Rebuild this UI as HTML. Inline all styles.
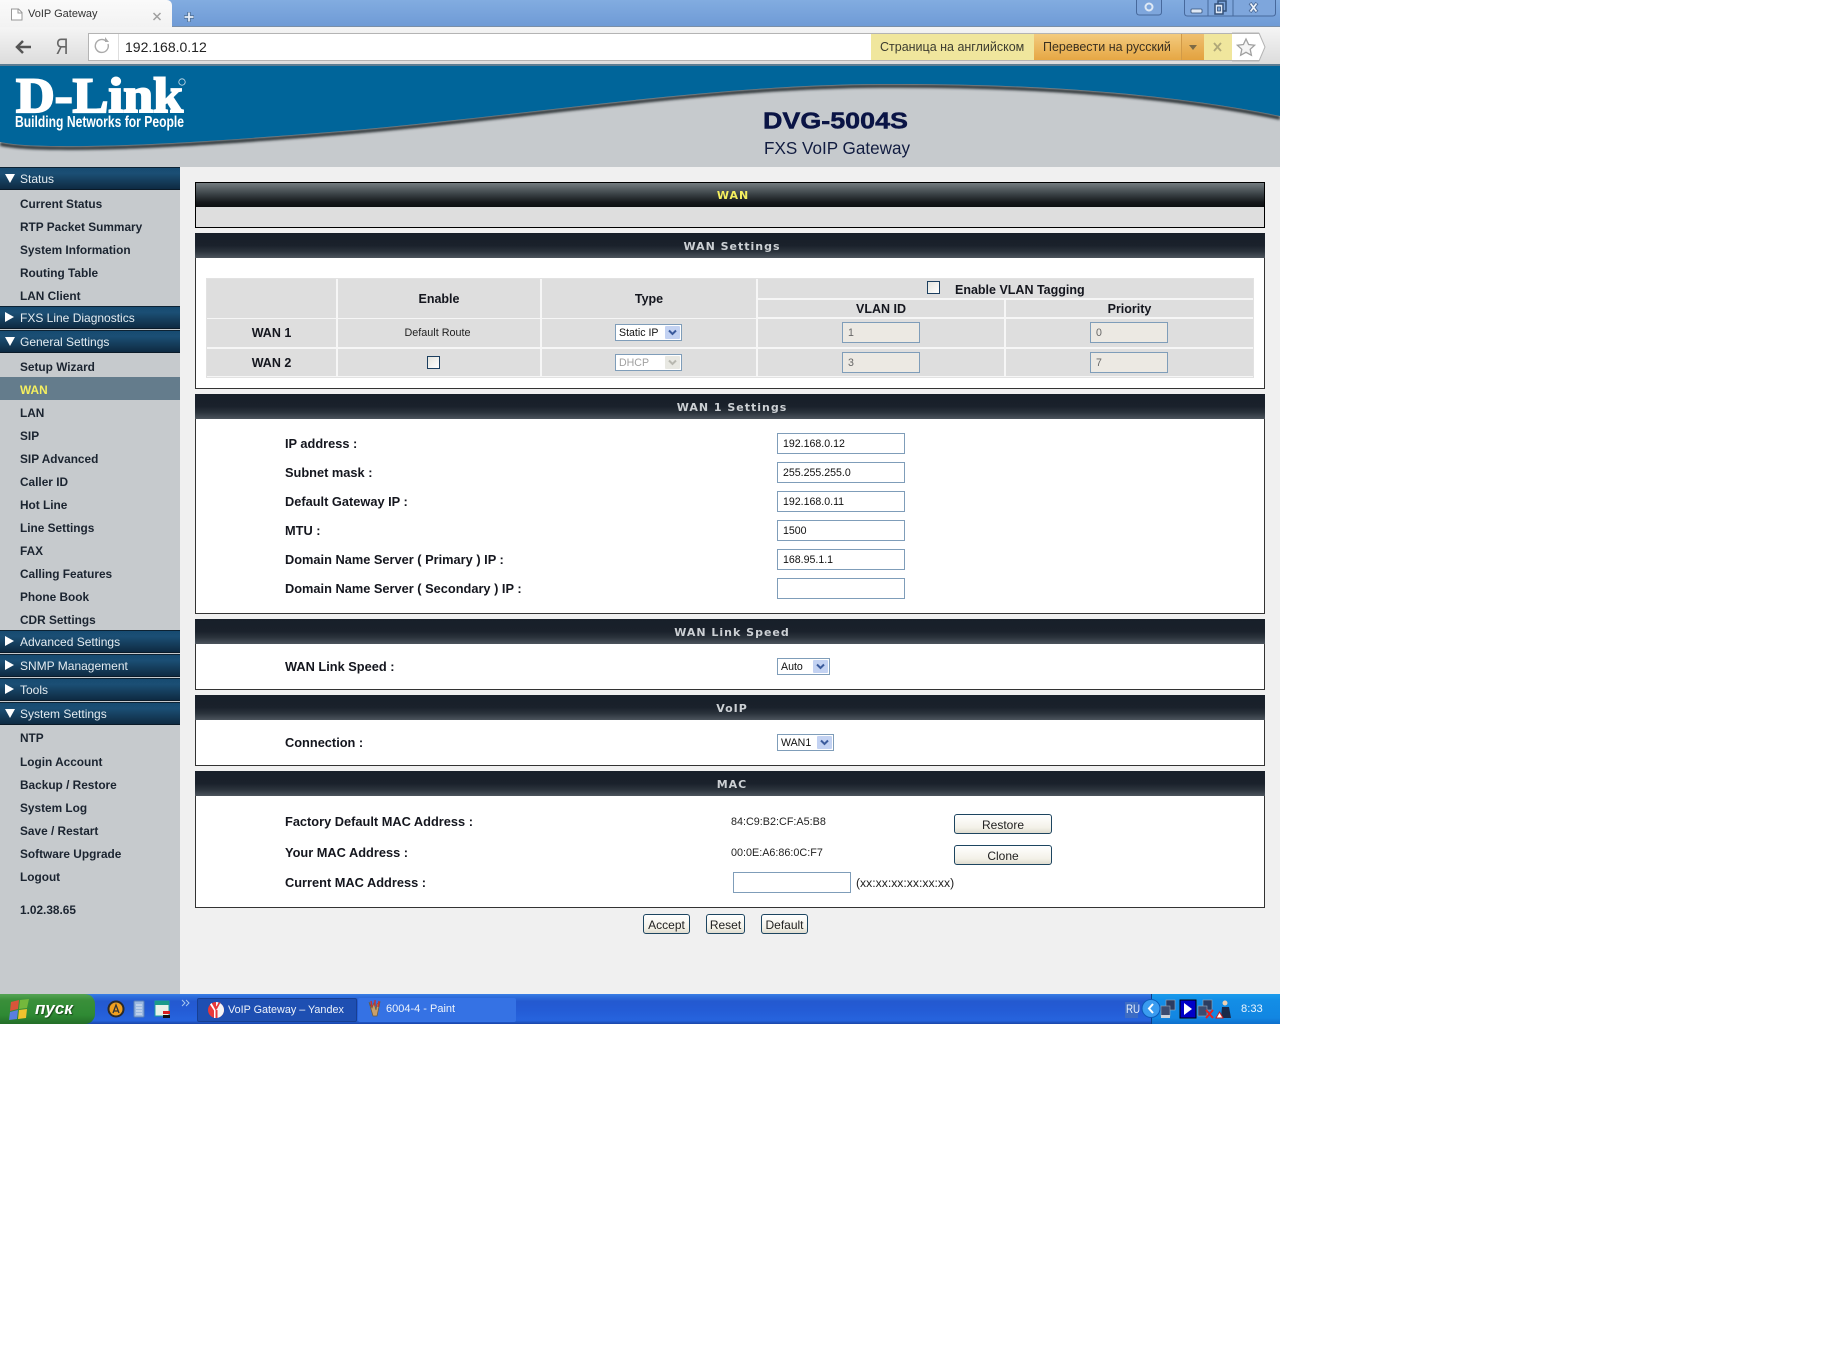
<!DOCTYPE html>
<html lang="en"><head><meta charset="utf-8"><title>VoIP Gateway</title>
<style>
html,body{margin:0;padding:0;background:#fff;width:1824px;height:1368px;overflow:hidden}
body{font-family:"Liberation Sans","Noto Sans CJK SC",sans-serif;color:#111}
#w{position:absolute;left:0;top:0;width:1280px;height:1024px;overflow:hidden;background:#f0f0f0}
.a,.t,.s,.i,.h,.l,.m{position:absolute}
.t{white-space:nowrap;line-height:20px;height:20px}
/* sidebar */
#side{position:absolute;left:0;top:167px;width:180px;height:827px;background:#c6cacd}
.s{left:0;width:180px;height:23px;box-sizing:border-box;background:linear-gradient(#164a70,#1b4f75 25%,#12344f 80%,#0e2a42);border-top:1px solid #0c2233;border-bottom:1px solid #0a1a28;color:#e4ecf1;font-size:12px;line-height:23px;padding-left:20px;white-space:nowrap}
.s i{position:absolute;left:5px;width:0;height:0;border-style:solid}
.s i.d{top:6px;border-width:9px 5px 0 5px;border-color:#fff transparent transparent transparent}
.s i.r{top:5px;left:5px;border-width:5px 0 5px 9px;border-color:transparent transparent transparent #fff}
.i{left:20px;margin-top:1px;font-size:11.85px;font-weight:bold;color:#1b2430;line-height:20px;white-space:nowrap}
/* panels */
.p{position:absolute;left:195px;width:1070px;box-sizing:border-box;background:#fff;border:1px solid #333;border-top:0}
.h{left:-1px;right:-1px;top:0;height:25px;background:linear-gradient(#171f29,#1a212b 50%,#2c343d 75%,#4c545c);color:#ccd0d4;font:bold 11px/27px "DejaVu Sans",sans-serif;letter-spacing:1px;text-align:center;padding-left:4px}
.l{left:285px;font-size:12.8px;font-weight:bold;color:#14161e;line-height:20px;white-space:nowrap}
input.f,select.f{position:absolute;box-sizing:border-box;margin:0;border:1px solid #7f9db9;background:#fff;font:10.6px "Liberation Sans",sans-serif;color:#111;padding:0 0 0 5px;border-radius:0;outline:0}
select.f{appearance:none;-webkit-appearance:none;padding-left:3px}
input.o{background:#ece9e3;color:#666}
input.c{position:absolute;margin:0;appearance:none;-webkit-appearance:none;border:1px solid #1c3f60;background:linear-gradient(135deg,#e4e4de,#fff);box-sizing:border-box}
button{position:absolute;box-sizing:border-box;margin:0;padding:1px 0 0;border:1px solid #1d4560;border-radius:3px;background:linear-gradient(#fff,#f3f1e8 70%,#dfdcd0);font:12px "Liberation Sans",sans-serif;color:#222;height:20px}
.ar{position:absolute;width:15px;height:13px;pointer-events:none}
.c1{position:absolute;background:#dedede}
.b{font-weight:bold;font-size:12.5px;color:#14161e;text-align:center}
</style></head><body>
<div id="w">

<!-- browser chrome -->
<div class="a" style="left:0;top:0;width:1280px;height:27px;background:linear-gradient(#82ace0,#6f9bd6);border-bottom:1px solid #7a8fa8;box-sizing:border-box"></div>
<div class="a" style="left:0;top:0;width:172px;height:28px;background:linear-gradient(#fafafa,#f2f2f2);border-top-right-radius:5px"></div>
<div class="t" style="left:28px;top:4px;font-size:11px;color:#333">VoIP Gateway</div>
<div class="a" style="left:0;top:27px;width:1280px;height:39px;background:linear-gradient(#f5f5f5,#dcdcdc);border-bottom:2px solid #5d7d92;box-sizing:border-box"></div>
<div class="a" style="left:88px;top:33px;width:1171px;height:28px;box-sizing:border-box;background:#fff;border:1px solid #b4b4b4;border-right:0"></div>
<div class="a" style="left:118px;top:34px;width:1px;height:26px;background:#dedede"></div>
<div class="t" style="left:125px;top:37px;font-size:14px;color:#222">192.168.0.12</div>
<div class="t" style="left:54px;top:37px;font-size:22px;color:#666;transform:scaleX(.8)">Я</div>
<div class="a" style="left:871px;top:34px;width:163px;height:26px;background:#f0e69d"></div>
<div class="t" style="left:880px;top:37px;font-size:12.5px;color:#3c3c30">Страница на английском</div>
<div class="a" style="left:1034px;top:34px;width:147px;height:26px;background:linear-gradient(#f3cb7e,#e6a744)"></div>
<div class="t" style="left:1043px;top:37px;font-size:12.5px;color:#3a3020">Перевести на русский</div>
<div class="a" style="left:1181px;top:34px;width:23px;height:26px;background:linear-gradient(#efc070,#e3a23f);border-left:1px solid #d19a48;box-sizing:border-box"></div>
<div class="a" style="left:1204px;top:34px;width:28px;height:26px;background:#f0e69d"></div>
<div class="a" style="left:1232px;top:34px;width:28px;height:26px;background:#fff"></div>
<svg class="a" style="left:0;top:0" width="1280" height="66" viewBox="0 0 1280 66">
 <path d="M11.5 9h7l3.500 3.500V20h-10.500z" fill="#fff" stroke="#999"/><path d="M18 9v4h4" fill="none" stroke="#999"/>
 <path d="M153.500 13l7 7M160.500 13l-7 7" stroke="#a0a0a0" stroke-width="1.500"/>
 <path d="M189 12v10M184 17h10" stroke="#4f7096" stroke-width="3.500"/><path d="M189 12.500v9M184.500 17h9" stroke="#e6eef8" stroke-width="1.800"/>
 <path d="M1136.500 0v12q0 3 3 3h19q3 0 3-3V0" fill="#7ea6dc" stroke="#47699c"/>
 <circle cx="1149" cy="7" r="3.500" fill="none" stroke="#dfe9f5" stroke-width="2"/>
 <path d="M1184.500 0v13q0 3 3 3h85q3 0 3-3V0" fill="#7ea6dc" stroke="#47699c"/>
 <path d="M1208 0v16M1233 0v16" stroke="#47699c"/>
 <rect x="1191" y="9" width="11" height="4" rx="1" fill="#dfe9f5" stroke="#33507a" stroke-width=".8"/>
 <rect x="1218" y="1" width="8" height="10" fill="none" stroke="#33507a" stroke-width="1.500"/><rect x="1215" y="4" width="8" height="10" fill="#dfe9f5" stroke="#33507a" stroke-width="1.500"/><rect x="1217.500" y="7" width="3" height="4" fill="#7ea6dc" stroke="#33507a" stroke-width=".8"/>
 <path d="M1250 3l7 9M1257 3l-7 9" stroke="#4a6a98" stroke-width="3.500"/><path d="M1250.500 3.500l6 8M1256.500 3.500l-6 8" stroke="#eaf0f8" stroke-width="1.800"/>
 <path d="M31 47H17M23 41l-6 6 6 6" fill="none" stroke="#555" stroke-width="2.500"/>
 <path d="M108 44a6.500 6.500 0 1 1-2-3" fill="none" stroke="#aaa" stroke-width="1.400"/><path d="M105 37v5h4z" fill="#aaa"/>
 <path d="M1189 45l8 0-4 5z" fill="#7e6a45"/>
 <path d="M1214 43l7 8M1221 43l-7 8" stroke="#b0a878" stroke-width="1.800"/>
 <path d="M1259 33l6 14-6 14z" fill="#fff"/><path d="M1259 33l6 14-6 14M1232 33h27M1232 61h27" fill="none" stroke="#b4b4b4"/>
 <path d="M1246 39l2.600 5.500 6 .7-4.400 4.100 1.200 6-5.400-3-5.400 3 1.200-6-4.400-4.100 6-.7z" fill="#f4f4f4" stroke="#a0a0a0" stroke-width="1.300"/>
</svg>

<!-- banner -->
<svg class="a" style="left:0;top:66px" width="1280" height="101" viewBox="0 66 1280 101">
 <defs>
  <filter id="bl" x="-5%" y="-50%" width="110%" height="200%"><feGaussianBlur stdDeviation="1.200"/></filter>
 </defs>
 <rect x="0" y="66" width="1280" height="101" fill="#c6cacd"/>
 <path d="M0 144C15 147 35 148 60 148C130 149 230 142 330 134C520 119 700 87 880 86C1040 85 1180 97 1280 118" fill="none" stroke="#2b3036" stroke-width="3.500" filter="url(#bl)"/>
 <path d="M0 66H1280V116C1180 95 1040 83 880 84C700 85 520 117 330 132C230 140 130 147 60 146C35 146 15 145 0 142Z" fill="#00659a"/>
 <text x="16" y="112" font-family="Liberation Serif" font-weight="bold" font-size="50" fill="#fff" stroke="#fff" stroke-width="2" textLength="167" lengthAdjust="spacingAndGlyphs">D-Link</text>
 <text x="15" y="127" font-family="Liberation Sans" font-weight="bold" font-size="15.500" fill="#fff" textLength="169" lengthAdjust="spacingAndGlyphs">Building Networks for People</text>
 <circle cx="182" cy="82" r="3.200" fill="none" stroke="#cfe0ea" stroke-width=".8"/>
 <text x="763" y="128.500" font-family="Liberation Sans" font-weight="bold" font-size="23" fill="#0a1445" stroke="#0a1445" stroke-width=".5" textLength="145" lengthAdjust="spacingAndGlyphs">DVG-5004S</text>
 <text x="764" y="154" font-family="Liberation Sans" font-size="17.500" fill="#111c40" textLength="146" lengthAdjust="spacingAndGlyphs">FXS VoIP Gateway</text>
</svg>

<!-- sidebar -->
<div id="side"></div>
<div class="s" style="top:167px"><i class="d"></i>Status</div>
<div class="i" style="top:193px">Current Status</div>
<div class="i" style="top:216px">RTP Packet Summary</div>
<div class="i" style="top:239px">System Information</div>
<div class="i" style="top:262px">Routing Table</div>
<div class="i" style="top:285px">LAN Client</div>
<div class="s" style="top:306px"><i class="r"></i>FXS Line Diagnostics</div>
<div class="s" style="top:330px"><i class="d"></i>General Settings</div>
<div class="i" style="top:356px">Setup Wizard</div>
<div class="a" style="left:0;top:377px;width:180px;height:23px;background:#647c8c"></div>
<div class="i" style="top:379px;color:#f5ef5f">WAN</div>
<div class="i" style="top:402px">LAN</div>
<div class="i" style="top:425px">SIP</div>
<div class="i" style="top:448px">SIP Advanced</div>
<div class="i" style="top:471px">Caller ID</div>
<div class="i" style="top:494px">Hot Line</div>
<div class="i" style="top:517px">Line Settings</div>
<div class="i" style="top:540px">FAX</div>
<div class="i" style="top:563px">Calling Features</div>
<div class="i" style="top:586px">Phone Book</div>
<div class="i" style="top:609px">CDR Settings</div>
<div class="s" style="top:630px"><i class="r"></i>Advanced Settings</div>
<div class="s" style="top:654px"><i class="r"></i>SNMP Management</div>
<div class="s" style="top:678px"><i class="r"></i>Tools</div>
<div class="s" style="top:702px"><i class="d"></i>System Settings</div>
<div class="i" style="top:727px">NTP</div>
<div class="i" style="top:751px">Login Account</div>
<div class="i" style="top:774px">Backup / Restore</div>
<div class="i" style="top:797px">System Log</div>
<div class="i" style="top:820px">Save / Restart</div>
<div class="i" style="top:843px">Software Upgrade</div>
<div class="i" style="top:866px">Logout</div>
<div class="i" style="top:899px">1.02.38.65</div>

<!-- WAN title panel -->
<div class="a" style="left:195px;top:182px;width:1070px;height:46px;box-sizing:border-box;border:1px solid #000;background:#dedede"></div>
<div class="a" style="left:196px;top:183px;width:1068px;height:24px;background:linear-gradient(#747c80,#3c4448 45%,#16191c 80%,#0c0e10);color:#f5ef5f;font:bold 11px/26px 'DejaVu Sans',sans-serif;letter-spacing:1px;text-align:center;padding-left:6px;box-sizing:border-box">WAN</div>

<!-- WAN settings -->
<div class="p" style="top:233px;height:156px"><div class="h">WAN Settings</div></div>
<div class="a" style="left:206px;top:278px;width:1048px;height:100px;background:#f6f6f6;outline:1px solid #e2e2e2;outline-offset:-1px"></div>
<div class="c1" style="left:207px;top:279px;width:129px;height:39px"></div>
<div class="c1 b" style="left:338px;top:279px;width:202px;height:39px;line-height:41px">Enable</div>
<div class="c1 b" style="left:542px;top:279px;width:214px;height:39px;line-height:41px">Type</div>
<div class="c1" style="left:758px;top:279px;width:495px;height:19px"></div>
<div class="c1 b" style="left:758px;top:300px;width:246px;height:17px;line-height:18px">VLAN ID</div>
<div class="c1 b" style="left:1006px;top:300px;width:247px;height:17px;line-height:18px">Priority</div>
<div class="c1 b" style="left:207px;top:319px;width:129px;height:28px;line-height:28px">WAN 1</div>
<div class="c1" style="left:338px;top:319px;width:202px;height:28px;font-size:10.8px;line-height:29px;color:#222;text-align:center;padding-right:3px;box-sizing:border-box">Default Route</div>
<div class="c1" style="left:542px;top:319px;width:214px;height:28px"></div>
<div class="c1" style="left:758px;top:319px;width:246px;height:28px"></div>
<div class="c1" style="left:1006px;top:319px;width:247px;height:28px"></div>
<div class="c1 b" style="left:207px;top:349px;width:129px;height:27px;line-height:28px">WAN 2</div>
<div class="c1" style="left:338px;top:349px;width:202px;height:27px"></div>
<div class="c1" style="left:542px;top:349px;width:214px;height:27px"></div>
<div class="c1" style="left:758px;top:349px;width:246px;height:27px"></div>
<div class="c1" style="left:1006px;top:349px;width:247px;height:27px"></div>
<input class="c" type="checkbox" style="left:927px;top:281px;width:13px;height:13px">
<div class="t b" style="left:955px;top:280px;font-size:12.5px">Enable VLAN Tagging</div>
<select class="f" style="left:615px;top:324px;width:67px;height:17px"><option>Static IP</option></select>
<svg class="ar" style="left:665px;top:326px" viewBox="0 0 15 13"><rect width="15" height="13" rx="1" fill="#c3d2f2"/><path d="M4 4.500l3.500 3.500 3.500-3.500" fill="none" stroke="#3b5b9c" stroke-width="2"/></svg>
<input class="c" type="checkbox" style="left:427px;top:356px;width:13px;height:13px">
<select class="f" disabled style="left:615px;top:354px;width:67px;height:17px;color:#a0a0a0;opacity:1"><option>DHCP</option></select>
<svg class="ar" style="left:665px;top:356px" viewBox="0 0 15 13"><rect width="15" height="13" rx="1" fill="#e8e8e2"/><path d="M4 4.500l3.500 3.500 3.500-3.500" fill="none" stroke="#b8b8b0" stroke-width="2"/></svg>
<input class="f o" value="1" style="left:842px;top:322px;width:78px;height:21px">
<input class="f o" value="0" style="left:1090px;top:322px;width:78px;height:21px">
<input class="f o" value="3" style="left:842px;top:352px;width:78px;height:21px">
<input class="f o" value="7" style="left:1090px;top:352px;width:78px;height:21px">

<!-- WAN 1 settings -->
<div class="p" style="top:394px;height:220px"><div class="h">WAN 1 Settings</div></div>
<div class="l" style="top:434px">IP address :</div>
<div class="l" style="top:463px">Subnet mask :</div>
<div class="l" style="top:492px">Default Gateway IP :</div>
<div class="l" style="top:521px">MTU :</div>
<div class="l" style="top:550px">Domain Name Server ( Primary ) IP :</div>
<div class="l" style="top:579px">Domain Name Server ( Secondary ) IP :</div>
<input class="f" value="192.168.0.12" style="left:777px;top:433px;width:128px;height:21px">
<input class="f" value="255.255.255.0" style="left:777px;top:462px;width:128px;height:21px">
<input class="f" value="192.168.0.11" style="left:777px;top:491px;width:128px;height:21px">
<input class="f" value="1500" style="left:777px;top:520px;width:128px;height:21px">
<input class="f" value="168.95.1.1" style="left:777px;top:549px;width:128px;height:21px">
<input class="f" value="" style="left:777px;top:578px;width:128px;height:21px">

<!-- Link speed -->
<div class="p" style="top:619px;height:71px"><div class="h">WAN Link Speed</div></div>
<div class="l" style="top:657px">WAN Link Speed :</div>
<select class="f" style="left:777px;top:658px;width:53px;height:17px"><option>Auto</option></select>
<svg class="ar" style="left:813px;top:660px" viewBox="0 0 15 13"><rect width="15" height="13" rx="1" fill="#c3d2f2"/><path d="M4 4.500l3.500 3.500 3.500-3.500" fill="none" stroke="#3b5b9c" stroke-width="2"/></svg>

<!-- VoIP -->
<div class="p" style="top:695px;height:71px"><div class="h">VoIP</div></div>
<div class="l" style="top:733px">Connection :</div>
<select class="f" style="left:777px;top:734px;width:57px;height:17px"><option>WAN1</option></select>
<svg class="ar" style="left:817px;top:736px" viewBox="0 0 15 13"><rect width="15" height="13" rx="1" fill="#c3d2f2"/><path d="M4 4.500l3.500 3.500 3.500-3.500" fill="none" stroke="#3b5b9c" stroke-width="2"/></svg>

<!-- MAC -->
<div class="p" style="top:771px;height:137px"><div class="h">MAC</div></div>
<div class="l" style="top:812px">Factory Default MAC Address :</div>
<div class="l" style="top:843px">Your MAC Address :</div>
<div class="l" style="top:873px">Current MAC Address :</div>
<div class="t" style="left:731px;top:812px;font-size:10.8px;color:#222">84:C9:B2:CF:A5:B8</div>
<div class="t" style="left:731px;top:843px;font-size:10.8px;color:#222">00:0E:A6:86:0C:F7</div>
<button style="left:954px;top:814px;width:98px">Restore</button>
<button style="left:954px;top:845px;width:98px">Clone</button>
<input class="f" value="" style="left:733px;top:872px;width:118px;height:21px">
<div class="t" style="left:856px;top:873px;font-size:12.2px;color:#222">(xx:xx:xx:xx:xx:xx)</div>
<button style="left:643px;top:914px;width:47px">Accept</button>
<button style="left:706px;top:914px;width:39px">Reset</button>
<button style="left:761px;top:914px;width:47px">Default</button>

<!-- taskbar -->
<div class="a" style="left:0;top:994px;width:1280px;height:30px;background:linear-gradient(#3b7fe6,#2f6fdc 8%,#2459d0 25%,#245cd6 55%,#2664de 88%,#1a46a8)"></div>
<div class="a" style="left:0;top:994px;width:95px;height:30px;background:linear-gradient(#55a455,#3a8f3a 20%,#2f8a34 70%,#236d28);border-radius:0 10px 10px 0"></div>
<div class="t" style="left:35px;top:998px;font:italic bold 17px/22px 'Liberation Sans',sans-serif;color:#fff;text-shadow:1px 1px 1px #1a4a1a">пуск</div>
<div class="a" style="left:197px;top:998px;width:160px;height:24px;background:#1e4fb2;border:1px solid #173f92;box-sizing:border-box;border-radius:2px"></div>
<div class="a" style="left:358px;top:998px;width:158px;height:24px;background:#3572e4;border-radius:2px"></div>
<div class="t" style="left:228px;top:1000px;font-size:10.8px;color:#eef3fb">VoIP Gateway – Yandex</div>
<div class="t" style="left:386px;top:999px;font-size:11px;color:#eef3fb">6004-4 - Paint</div>
<div class="a" style="left:1151px;top:994px;width:129px;height:30px;background:linear-gradient(#1b9ced,#138ee6 20%,#1286e2 80%,#0f6fcc);border-left:1px solid #0d3f8a;box-sizing:border-box"></div>
<div class="a" style="left:1125px;top:1002px;width:13px;height:16px;background:#3c6cc4"></div>
<div class="t" style="left:1126px;top:1000px;font-size:11.5px;color:#e8f0fb;transform-origin:left;transform:scaleX(.85)">RU</div>
<div class="t" style="left:1241px;top:999px;font-size:11.2px;color:#e8f3fd">8:33</div>
<svg class="a" style="left:0;top:994px" width="1280" height="30" viewBox="0 994 1280 30">
 <path d="M11 1002l8-2-1 9-8 2z" fill="#d8553a"/><path d="M20 1000l9-1-2 9-8 1z" fill="#74b83c"/><path d="M10 1012l8-2-1 9-8 1z" fill="#5a7ee0"/><path d="M19 1010l8-1-1 9-8 1z" fill="#f0c22e"/>
 <circle cx="116" cy="1009" r="7.500" fill="#f0a020" stroke="#2a2a2a" stroke-width="2"/><path d="M113 1013l3-8 3 8M114 1011h4" fill="none" stroke="#333" stroke-width="1.300"/>
 <rect x="134" y="1001" width="10" height="16" rx="1" fill="#9bb8e0" stroke="#5a7fb8"/><path d="M136 1005h6M136 1008h6M136 1011h6M136 1014h6" stroke="#dfe8f4"/>
 <rect x="155" y="1001" width="14" height="15" fill="#e8f2e8" stroke="#1aa0a0"/><rect x="155" y="1001" width="14" height="4" fill="#1a9a8a"/><rect x="163" y="1011" width="7" height="3" fill="#d82020"/><rect x="163" y="1015" width="7" height="3" fill="#111"/>
 <path d="M182 1000l3 3-3 3M186 1000l3 3-3 3" fill="none" stroke="#a8c8f0"/>
 <circle cx="216" cy="1010" r="8" fill="#e8383a"/><path d="M216 1002a8 8 0 0 1 0 16z" fill="#f5f5f5"/><path d="M213 1002.500l3.500 7.500 4-7.500h-2l-2 4-2-4zM215 1010h2.500v8h-2.500z" fill="#e8383a"/><path d="M211.500 1003l4 7v8h-1.500v-7.500l-4-6z" fill="#fff"/>
 <path d="M369 1002l4 14h4l3-14-3 2-1 6-2-7-2 5z" fill="#c9a06a" stroke="#6a5a3a" stroke-width=".7"/><path d="M371 1001l1 6M375 1000v6M379 1001l-1 6" stroke="#c33" stroke-width="1.500"/>
 <circle cx="1151" cy="1008.500" r="9" fill="#3a9cf0" stroke="#0d5ab8"/><path d="M1153 1004l-4 4.500 4 4.500" fill="none" stroke="#fff" stroke-width="2"/>
 <rect x="1166" y="1000" width="9" height="10" fill="#2c3c60" stroke="#9ab" stroke-width=".6"/><rect x="1161" y="1006" width="9" height="10" fill="#3c4c70" stroke="#9ab" stroke-width=".6"/><rect x="1161" y="1015" width="9" height="3" fill="#cdd4dc"/>
 <rect x="1180" y="1000" width="16" height="18" fill="#0000c8" stroke="#000"/><path d="M1184 1003l8 6-8 6z" fill="#fff"/>
 <rect x="1203" y="1000" width="9" height="10" fill="#2c3c60" stroke="#9ab" stroke-width=".6"/><rect x="1198" y="1006" width="9" height="10" fill="#3c4c70" stroke="#9ab" stroke-width=".6"/><path d="M1206 1010l7 8M1213 1010l-7 8" stroke="#e82020" stroke-width="2"/>
 <circle cx="1225" cy="1003" r="2.500" fill="#f0d0b0"/><path d="M1221 1018l1-11h7l2 11z" fill="#1a2a4a"/><path d="M1216 1018l3.500-6 3.500 6z" fill="#fff" stroke="#d02020"/>
</svg>
</div>
</body></html>
